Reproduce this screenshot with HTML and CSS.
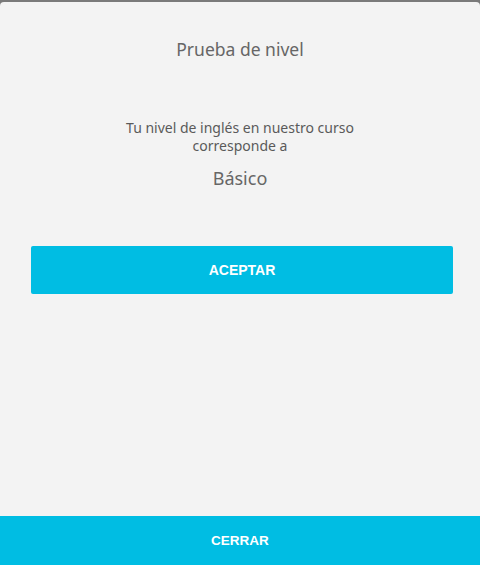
FILE: index.html
```html
<!DOCTYPE html>
<html lang="es">
<head>
    <meta charset="UTF-8">
    <meta name="viewport" content="width=device-width, initial-scale=1.0">
    <title>Prueba de nivel</title>
    <link rel="stylesheet" href="styles.css">
</head>
<body>
    <div class="modal">
        <h1 class="modal-title">Prueba de nivel</h1>

        <div class="result">
            <p class="result-text">Tu nivel de inglés en nuestro curso<br>corresponde a</p>
            <p class="result-level">Básico</p>
        </div>

        <div class="actions">
            <button class="btn-accept" type="button">ACEPTAR</button>
        </div>

        <button class="btn-close" type="button">CERRAR</button>
    </div>
</body>
</html>
```

FILE: styles.css
```css
/* Fond derrière la fenêtre */
html, body {
  margin: 0;
  height: 100%;
  background-color: #7a7a7a;
}

body {
  font-family: "Noto Sans", "Open Sans", sans-serif;
  overflow: hidden;
}

/* La fenêtre modale */
.modal {
  margin-top: 2px;
  height: 563px;
  background-color: #f3f3f3;
  border-radius: 4px 4px 0 0;
  display: flex;
  flex-direction: column;
  box-sizing: border-box;
}

.modal-title {
  margin: 36px 0 0;
  text-align: center;
  font-size: 17.5px;
  font-weight: 400;
  line-height: 22px;
  color: #666;
}

.result {
  margin-top: 59px;
  text-align: center;
}

.result-text {
  margin: 0;
  font-size: 14px;
  line-height: 18px;
  color: #5a5a5a;
}

.result-level {
  margin: 12px 0 0;
  font-size: 18px;
  line-height: 22px;
  color: #666;
}

.actions {
  margin-top: 57px;
  padding: 0 27px 0 31px;
}

.btn-accept,
.btn-close {
  display: block;
  width: 100%;
  border: none;
  color: #fff;
  background-color: #00bde3;
  font-family: "Liberation Sans", Arial, sans-serif;
  font-weight: bold;
  font-size: 14px;
  cursor: pointer;
}

.btn-accept {
  height: 48px;
  border-radius: 2px;
}

/* Bouton du bas, collé au bord */
.btn-close {
  margin-top: auto;
  height: 49px;
  font-size: 13.5px;
}
```
